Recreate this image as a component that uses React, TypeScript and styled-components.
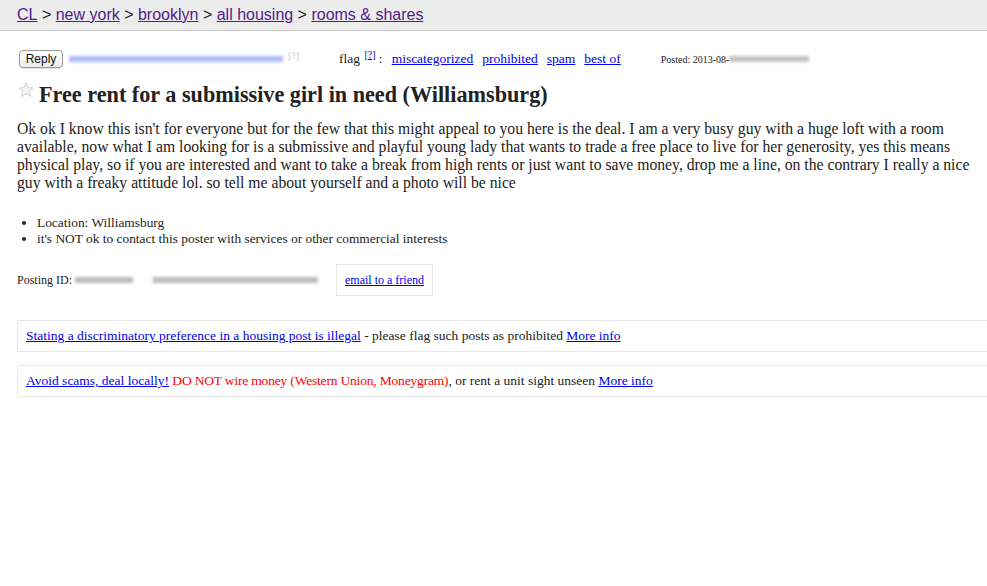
import React from "react";
import styled, { createGlobalStyle } from "styled-components";

const Global = createGlobalStyle`
  html, body { margin: 0; padding: 0; background: #fff; overflow: hidden; }
  body { font-family: "Liberation Serif", "Times New Roman", serif; color: #222; }
  a { color: #00e; }
`;

const Header = styled.header`
  height: 30px;
  background: #ececec;
  border-bottom: 1px solid #c8c8c8;
  display: flex;
  align-items: center;
  padding-left: 17px;
  font-family: "Liberation Sans", Arial, sans-serif;
  font-size: 16px;
  color: #222;
  white-space: pre;
`;

const Crumb = styled.a`
  color: #551a8b;
`;

const Main = styled.main`
  padding: 18px 0 0 17px;
`;

const ReplyRow = styled.div`
  display: flex;
  align-items: center;
  height: 20px;
  font-size: 13px;
`;

const ReplyButton = styled.button`
  font-family: "Liberation Sans", Arial, sans-serif;
  font-size: 12px;
  color: #111;
  height: 18px;
  width: 44px;
  padding: 0;
  margin-left: 2px;
  border: 1px solid #9a9a9a;
  border-radius: 4px;
  background: linear-gradient(#ffffff, #ececec);
  box-shadow: 0 1px 1px rgba(0, 0, 0, 0.12);
`;

const Blurred = styled.span<{ $color?: string; $width: number }>`
  display: inline-block;
  width: ${(p) => p.$width}px;
  height: 6px;
  background: ${(p) => p.$color || "#999"};
  filter: blur(1.8px);
  opacity: 0.5;
  vertical-align: middle;
`;

const EmailGroup = styled.span`
  display: inline-flex;
  align-items: center;
  margin-left: 6px;
  width: 270px;
`;

const GreyHelp = styled.span`
  font-size: 10px;
  color: #c8c8c8;
  margin-left: 5px;
  margin-top: -8px;
`;

const Flag = styled.span`
  font-size: 13.5px;
  white-space: pre;
`;

const Sup = styled.sup`
  font-size: 10px;
  margin-left: 1px;
  line-height: 0;
`;

const FlagLink = styled.a`
  margin-left: 9px;
`;

const Posted = styled.span`
  margin-left: 40px;
  font-size: 10px;
  display: inline-flex;
  align-items: center;
`;

const TitleRow = styled.div`
  display: flex;
  align-items: center;
  margin-top: 12px;
  height: 28px;
`;

const Star = styled.svg`
  width: 18px;
  height: 18px;
  margin-right: 4px;
  margin-top: -11px;
`;

const Title = styled.h2`
  margin: 0;
  font-size: 22.2px;
  font-weight: bold;
  color: #222;
`;

const Body = styled.section`
  margin-top: 11px;
  font-size: 15.7px;
  line-height: 18px;
  padding-right: 10px;
`;

const Attrs = styled.ul`
  margin: 23px 0 0 0;
  padding-left: 20px;
  font-size: 13.4px;
  line-height: 16px;
`;

const Attr = styled.li`
  line-height: 16px;
`;

const PostingRow = styled.div`
  margin-top: 17px;
  display: flex;
  align-items: center;
  font-size: 12px;
`;

const Gap = styled.span`
  width: 20px;
`;

const EmailFriend = styled.div`
  margin-left: 18px;
  border: 1px solid #e6e6e6;
  height: 30px;
  padding: 0 8px;
  display: flex;
  align-items: center;
  font-size: 12px;
`;

const Notice = styled.div<{ $top: number }>`
  margin-top: ${(p) => p.$top}px;
  width: calc(100% + 10px);
  height: 30px;
  line-height: 30px;
  border: 1px solid #e8e8e8;
  padding-left: 8px;
  font-size: 13.5px;
  white-space: pre;
`;

const Red = styled.span`
  color: #f00;
  letter-spacing: -0.18px;
`;

export default function App() {
  return (
    <>
      <Global />
      <Header>
        <Crumb href="#">CL</Crumb>
        {" > "}
        <Crumb href="#">new york</Crumb>
        {" > "}
        <Crumb href="#">brooklyn</Crumb>
        {" > "}
        <Crumb href="#">all housing</Crumb>
        {" > "}
        <Crumb href="#">rooms &amp; shares</Crumb>
      </Header>
      <Main>
        <ReplyRow>
          <ReplyButton>Reply</ReplyButton>
          <EmailGroup>
            <Blurred $width={214} $color="#5a74f2" />
            <GreyHelp>[?]</GreyHelp>
          </EmailGroup>
          <Flag>
            {"flag "}
            <Sup>
              <a href="#">[?]</a>
            </Sup>
            {" :"}
            <FlagLink href="#">miscategorized</FlagLink>
            <FlagLink href="#">prohibited</FlagLink>
            <FlagLink href="#">spam</FlagLink>
            <FlagLink href="#">best of</FlagLink>
          </Flag>
          <Posted>
            Posted: 2013-08-
            <Blurred $width={80} $color="#888" />
          </Posted>
        </ReplyRow>
        <TitleRow>
          <Star viewBox="0 0 24 24">
            <path
              d="M12 2.5l2.9 6.2 6.6.7-5 4.5 1.4 6.6L12 17.2l-5.9 3.3 1.4-6.6-5-4.5 6.6-.7z"
              fill="#f2f2f2"
              stroke="#c8c8c8"
              strokeWidth="1"
            />
          </Star>
          <Title>Free rent for a submissive girl in need (Williamsburg)</Title>
        </TitleRow>
        <Body>
          Ok ok I know this isn't for everyone but for the few that this might appeal to you here is the deal. I am a very busy guy with a huge loft with a room available, now what I am looking for is a submissive and playful young lady that wants to trade a free place to live for her generosity, yes this means physical play, so if you are interested and want to take a break from high rents or just want to save money, drop me a line, on the contrary I really a nice guy with a freaky attitude lol. so tell me about yourself and a photo will be nice
        </Body>
        <Attrs>
          <Attr>Location: Williamsburg</Attr>
          <Attr>it's NOT ok to contact this poster with services or other commercial interests</Attr>
        </Attrs>
        <PostingRow>
          Posting ID:&nbsp;
          <Blurred $width={58} $color="#777" />
          <Gap />
          <Blurred $width={165} $color="#777" />
          <EmailFriend>
            <a href="#">email to a friend</a>
          </EmailFriend>
        </PostingRow>
        <Notice $top={24}>
          <a href="#">Stating a discriminatory preference in a housing post is illegal</a>
          {" - please flag such posts as prohibited "}
          <a href="#">More info</a>
        </Notice>
        <Notice $top={13}>
          <a href="#">Avoid scams, deal locally!</a>
          {" "}
          <Red>DO NOT wire money (Western Union, Moneygram)</Red>
          {", or rent a unit sight unseen "}
          <a href="#">More info</a>
        </Notice>
      </Main>
    </>
  );
}
